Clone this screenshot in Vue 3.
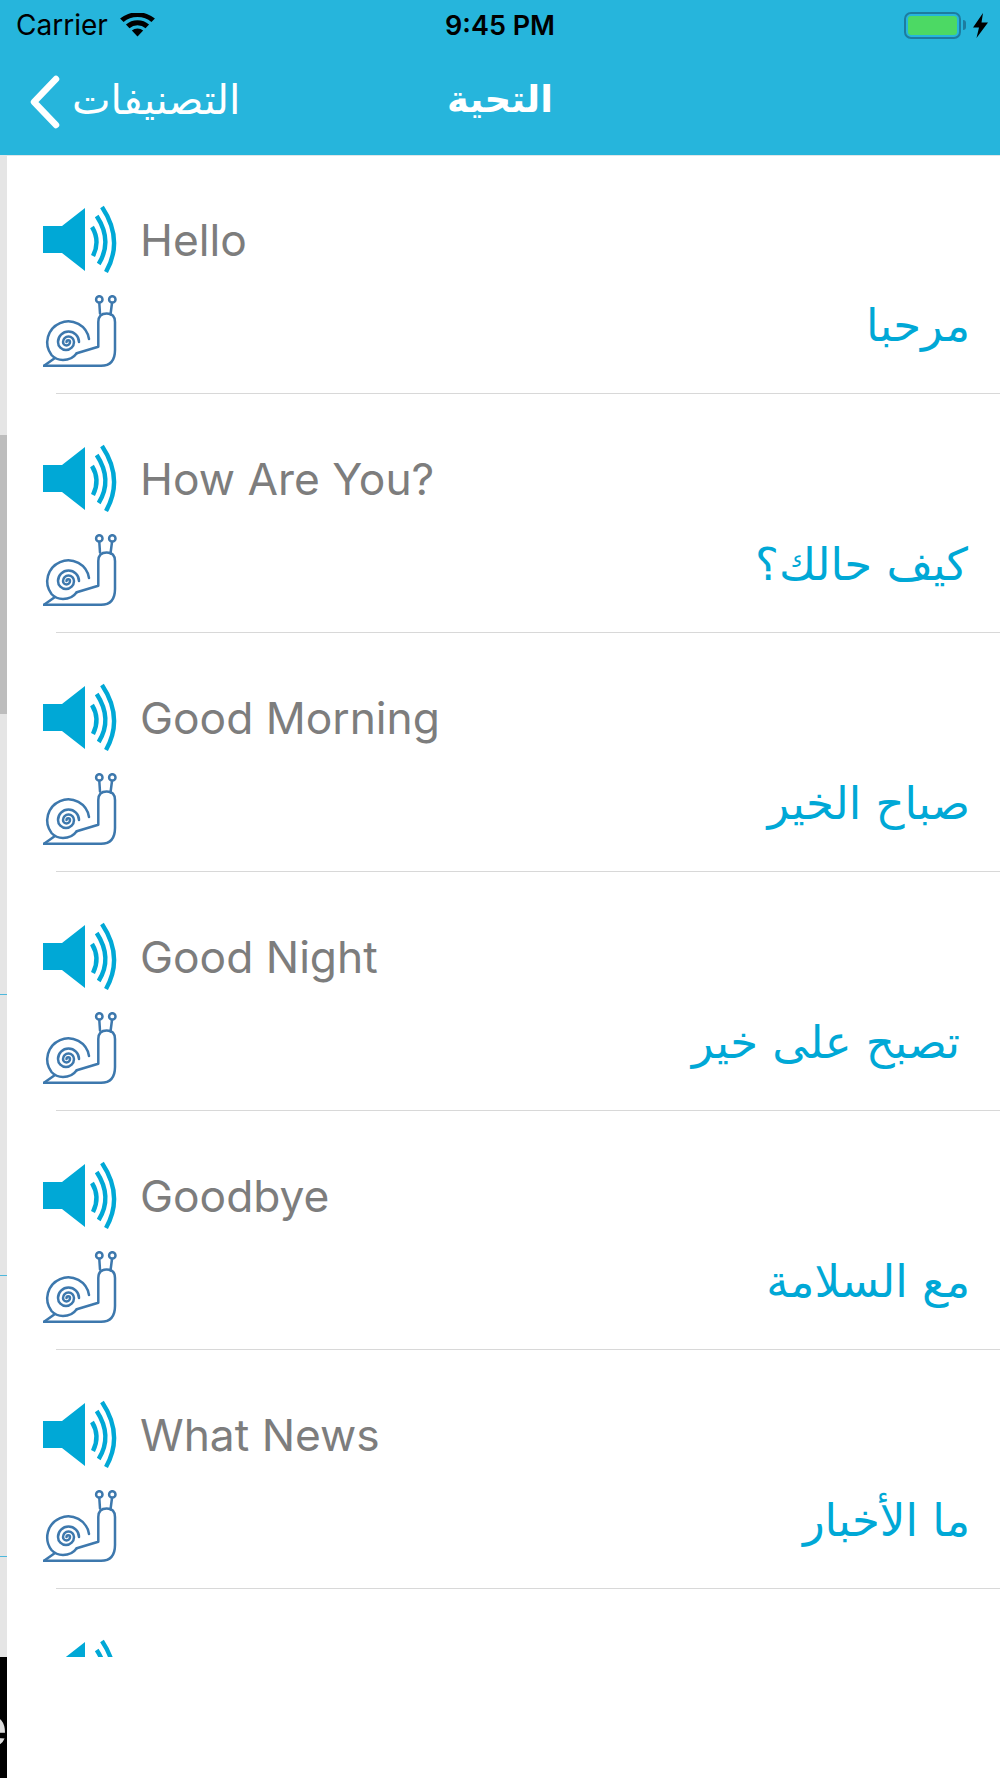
<script setup>
const rows = [
  { en: 'Hello', ar: 'مرحبا', pad: 30 },
  { en: 'How Are You?', ar: 'كيف حالك؟', pad: 32 },
  { en: 'Good Morning', ar: 'صباح الخير', pad: 30 },
  { en: 'Good Night', ar: 'تصبح على خير', pad: 40 },
  { en: 'Goodbye', ar: 'مع السلامة', pad: 30 },
  { en: 'What News', ar: 'ما الأخبار', pad: 30 },
  { en: '', ar: '', pad: 30 },
]
</script>

<template>
  <div class="screen">
    <header class="header">
      <div class="status">
        <div class="status-left">
          <span class="carrier">Carrier</span>
          <svg class="wifi" viewBox="0 0 34 24" width="37" height="24" preserveAspectRatio="none">
            <path d="M17 23.5 L11.8 17.6 A7.6 7.6 0 0 1 22.2 17.6 Z" fill="#000" />
            <path d="M9.6 15.2 L6.4 11.6 A15.4 15.4 0 0 1 27.6 11.6 L24.4 15.2 A10.8 10.8 0 0 0 9.6 15.2 Z" fill="#000" />
            <path d="M4.2 9.1 L1 5.6 A23.4 23.4 0 0 1 33 5.6 L29.8 9.1 A18.6 18.6 0 0 0 4.2 9.1 Z" fill="#000" />
          </svg>
        </div>
        <span class="time">9:45 PM</span>
        <div class="status-right">
          <div class="battery"><div class="battery-fill"></div></div>
          <div class="nub"></div>
          <svg class="bolt" viewBox="0 0 15 25" width="15" height="25">
            <path d="M10 0 L0 14.5 H6 L3.5 25 L15 9.5 H8.5 Z" fill="#000" />
          </svg>
        </div>
      </div>
      <nav class="nav">
        <div class="back">
          <svg class="chevron" viewBox="0 0 32 54" width="32" height="54">
            <path d="M27 4 L5 27 L27 50" fill="none" stroke="#fff" stroke-width="6.5" stroke-linecap="round" stroke-linejoin="round" />
          </svg>
          <span class="back-text" dir="rtl">التصنيفات</span>
        </div>
        <span class="title" dir="rtl">التحية</span>
      </nav>
    </header>

    <main class="body">
      <aside class="rail">
        <div class="track">
          <div class="thumb"></div>
          <div class="tick"></div>
          <div class="tick"></div>
          <div class="tick"></div>
        </div>
        <div class="rail-foot"><span>e</span></div>
      </aside>
      <section class="list">
        <article v-for="(row, i) in rows" :key="i" class="row">
          <div class="row-top">
            <svg class="speaker" viewBox="0 0 74 70" width="74" height="70">
              <path d="M0 21 H19 L42 3 V66 L19 48 H0 Z" fill="#00a8d6" />
              <g fill="none" stroke="#00a8d6" stroke-width="4.4">
                <path d="M49 22 Q57.5 36 50 51" />
                <path d="M53.7 11 Q70 36 55.7 59" />
                <path d="M59 2 Q81 35 63 67" />
              </g>
            </svg>
            <span class="en">{{ row.en }}</span>
          </div>
          <div class="row-bottom" :style="{ paddingRight: row.pad + 'px' }">
            <svg class="snail" viewBox="0 0 74 73" width="74" height="73">
              <g fill="none" stroke="#3d78ad" stroke-width="2.5" stroke-linecap="round" stroke-linejoin="round">
                <path d="M33.7 58.3 Q29 65 20 65 Q13 65 8.5 60 A21 21 0 1 1 46 44" />
                <path d="M36 47 A10.5 10.5 0 0 0 15 47 A8 8 0 0 0 31 47 A5.5 5.5 0 0 0 20 47 A3.5 3.5 0 0 0 27 47 A1.75 1.75 0 0 0 23.5 47" />
                <path d="M1 70.8 H58 Q72 70.8 72 55 V27 Q72 18.4 63.7 18.4 Q55.3 18.4 55.3 27 V51.7 L33.7 58.3" />
                <path d="M1 70.8 L12 63" />
                <path d="M57 18.5 L56.3 8" />
                <path d="M67.5 19.5 L69 8" />
                <circle cx="56.3" cy="4.4" r="3.2" />
                <circle cx="69.3" cy="4.4" r="3.2" />
              </g>
            </svg>
            <span class="ar" dir="rtl">{{ row.ar }}</span>
          </div>
          <div class="sep"></div>
        </article>
      </section>
    </main>
  </div>
</template>

<style scoped>
.screen {
  width: 1000px;
  height: 1778px;
  background: #fff;
  display: flex;
  flex-direction: column;
  overflow: hidden;
  font-family: Inter, "Liberation Sans", sans-serif;
}
.header {
  height: 156px;
  flex: none;
  background: #26b5dc;
  border-bottom: 1px solid #dfe6e9;
  box-sizing: border-box;
}
.status {
  height: 50px;
  position: relative;
  display: flex;
  align-items: center;
  justify-content: space-between;
  padding: 0 12px 0 16px;
}
.status-left {
  display: flex;
  align-items: center;
  gap: 11px;
}
.carrier {
  font-size: 28px;
  color: #000;
}
.wifi {
  display: block;
}
.time {
  position: absolute;
  left: 0;
  right: 0;
  text-align: center;
  font-size: 27px;
  font-weight: 600;
  color: #000;
}
.status-right {
  display: flex;
  align-items: center;
}
.battery {
  width: 57px;
  height: 27px;
  box-sizing: border-box;
  border: 2.5px solid #1d7c9f;
  border-radius: 7px;
  padding: 2px;
}
.battery-fill {
  height: 100%;
  background: #4cd964;
  border-radius: 3px;
}
.nub {
  width: 3px;
  height: 10px;
  margin-left: 2px;
  background: #1d7c9f;
  border-radius: 0 3px 3px 0;
}
.bolt {
  margin-left: 7px;
  display: block;
}
.nav {
  height: 104px;
  position: relative;
  display: flex;
  align-items: center;
}
.back {
  display: flex;
  align-items: center;
  gap: 11px;
  padding-left: 29px;
}
.chevron {
  display: block;
}
.back-text {
  font-family: "DejaVu Sans", sans-serif;
  font-size: 41px;
  line-height: 50px;
  margin-top: -4px;
  color: #fff;
}
.title {
  position: absolute;
  left: 0;
  right: 0;
  text-align: center;
  font-family: "DejaVu Sans", sans-serif;
  font-size: 37px;
  line-height: 50px;
  margin-top: -4px;
  font-weight: 700;
  color: #fff;
}
.body {
  flex: 1;
  display: flex;
  min-height: 0;
}
.rail {
  width: 7px;
  flex: none;
  display: flex;
  flex-direction: column;
}
.track {
  height: 1501px;
  flex: none;
  background: #e5e5e5;
  display: flex;
  flex-direction: column;
}
.thumb {
  height: 279px;
  margin-top: 279px;
  background: #bdbdbd;
}
.tick {
  height: 1px;
  background: #4db8dc;
  margin-top: 280px;
  flex: none;
}
.rail-foot {
  flex: 1;
  background: #000;
  display: flex;
  justify-content: flex-end;
  overflow: hidden;
}
.rail-foot span {
  flex: none;
  font-size: 56px;
  line-height: 52px;
  padding-top: 44px;
  color: #ddd;
  font-family: "Liberation Sans", sans-serif;
  font-weight: 700;
}
.list {
  flex: 1;
  height: 1502px;
  margin-top: -1px;
  overflow: hidden;
}
.row {
  height: 239px;
  box-sizing: border-box;
  padding-top: 45px;
}
.row-top {
  height: 80px;
  display: flex;
  align-items: center;
  gap: 23px;
  padding-left: 36px;
}
.speaker {
  display: block;
  flex: none;
}
.en {
  font-size: 44.3px;
  color: #7d7d7d;
  white-space: nowrap;
}
.row-bottom {
  height: 91px;
  display: flex;
  justify-content: space-between;
  padding-left: 36px;
  box-sizing: border-box;
  position: relative;
}
.snail {
  display: block;
  flex: none;
  margin-top: 15px;
}
.ar {
  font-family: "DejaVu Sans", sans-serif;
  font-size: 45px;
  color: #00a8d6;
  white-space: nowrap;
  line-height: 91px;
}
.sep {
  height: 1px;
  margin: 22px 0 0 49px;
  background: #d8d8d8;
}
</style>
